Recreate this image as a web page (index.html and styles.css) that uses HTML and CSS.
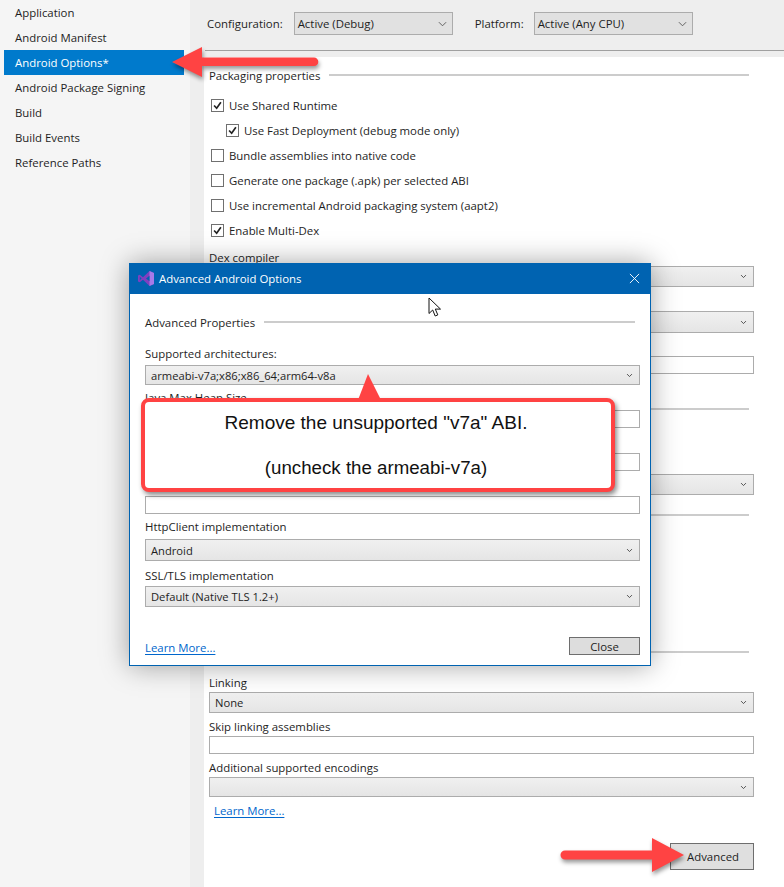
FILE: index.html
```html
<!DOCTYPE html>
<html lang="en">
<head>
<meta charset="utf-8">
<title>Android Options</title>
<link rel="stylesheet" href="styles.css">
</head>
<body>
<div class="page">
  <nav class="sidebar">
    <div class="nav-item">Application</div>
    <div class="nav-item">Android Manifest</div>
    <div class="nav-item active">Android Options*</div>
    <div class="nav-item">Android Package Signing</div>
    <div class="nav-item">Build</div>
    <div class="nav-item">Build Events</div>
    <div class="nav-item">Reference Paths</div>
  </nav>
  <main class="main">
    <header class="config-bar">
      <div class="config-row">
        <span class="config-label">Configuration:</span>
        <div class="combo config-combo"><span>Active (Debug)</span><svg class="chev" viewBox="0 0 10 6"><path d="M1 1l4 4 4-4"/></svg></div>
        <span class="config-label platform">Platform:</span>
        <div class="combo config-combo"><span>Active (Any CPU)</span><svg class="chev" viewBox="0 0 10 6"><path d="M1 1l4 4 4-4"/></svg></div>
      </div>
    </header>
    <section class="content">
      <div class="group-head first"><span>Packaging properties</span><i></i></div>
      <div class="check-row"><span class="box"><svg viewBox="0 0 13 13"><path d="M2.500 6.500l3 3.200 5-7"/></svg></span>Use Shared Runtime</div>
      <div class="check-row sub"><span class="box"><svg viewBox="0 0 13 13"><path d="M2.500 6.500l3 3.200 5-7"/></svg></span>Use Fast Deployment (debug mode only)</div>
      <div class="check-row"><span class="box"></span>Bundle assemblies into native code</div>
      <div class="check-row"><span class="box"></span>Generate one package (.apk) per selected ABI</div>
      <div class="check-row"><span class="box"></span>Use incremental Android packaging system (aapt2)</div>
      <div class="check-row"><span class="box"><svg viewBox="0 0 13 13"><path d="M2.500 6.500l3 3.200 5-7"/></svg></span>Enable Multi-Dex</div>
      <div class="field-label dex">Dex compiler</div>
      <div class="combo wide"><span></span><svg class="chev small" viewBox="0 0 10 6"><path d="M1.500 1l3.500 3.500L8.500 1"/></svg></div>
      <div class="combo wide s2"><span></span><svg class="chev small" viewBox="0 0 10 6"><path d="M1.500 1l3.500 3.500L8.500 1"/></svg></div>
      <div class="input wide s3"></div>
      <div class="rule r1"></div>
      <div class="combo wide s4"><span></span><svg class="chev small" viewBox="0 0 10 6"><path d="M1.500 1l3.500 3.500L8.500 1"/></svg></div>
      <div class="rule r2"></div>
      <div class="rule r3"></div>
      <div class="field-label link">Linking</div>
      <div class="combo wide"><span>None</span><svg class="chev small" viewBox="0 0 10 6"><path d="M1.500 1l3.500 3.500L8.500 1"/></svg></div>
      <div class="field-label skip">Skip linking assemblies</div>
      <div class="input wide"></div>
      <div class="field-label enc">Additional supported encodings</div>
      <div class="combo wide short"><span></span><svg class="chev small" viewBox="0 0 10 6"><path d="M1.500 1l3.500 3.500L8.500 1"/></svg></div>
      <a class="learn main-learn">Learn More...</a>
      <div class="advanced-row"><div class="button advanced">Advanced</div></div>
    </section>
  </main>
</div>

<div class="dialog">
  <div class="titlebar">
    <svg class="vs-logo" viewBox="0 0 16 16"><path fill="#7f3fc0" d="M11.500.6L16 2.500v11l-4.500 1.900L5 9.300 1.800 11.800 0 10.900V5.100l1.800-.9L5 6.700z"/><path fill="#a67ae8" d="M11.500.6L16 2.500v11l-4.500 1.900z"/><path fill="#0063b1" d="M11.500 5.200L8 8l3.500 2.800zM1.800 6.200v3.600L3.600 8z"/></svg>
    <span class="dialog-title">Advanced Android Options</span>
    <svg class="close-x" viewBox="0 0 12 12"><path d="M1 1l10 10M11 1L1 11"/></svg>
  </div>
  <div class="dialog-body">
    <div class="group-head adv"><span>Advanced Properties</span><i></i></div>
    <div class="field-label arch">Supported architectures:</div>
    <div class="combo full tight"><span>armeabi-v7a;x86;x86_64;arm64-v8a</span><svg class="chev small" viewBox="0 0 10 6"><path d="M1.500 1l3.500 3.500L8.500 1"/></svg></div>
    <div class="field-label heap">Java Max Heap Size</div>
    <div class="input full"></div>
    <div class="field-label gap2">Java Options</div>
    <div class="input full"></div>
    <div class="field-label gap3">Extra Options</div>
    <div class="input full"></div>
    <div class="field-label http">HttpClient implementation</div>
    <div class="combo full tall"><span>Android</span><svg class="chev small" viewBox="0 0 10 6"><path d="M1.500 1l3.500 3.500L8.500 1"/></svg></div>
    <div class="field-label ssl">SSL/TLS implementation</div>
    <div class="combo full"><span>Default (Native TLS 1.2+)</span><svg class="chev small" viewBox="0 0 10 6"><path d="M1.500 1l3.500 3.500L8.500 1"/></svg></div>
    <div class="dialog-foot">
      <a class="learn">Learn More...</a>
      <div class="button close-btn">Close</div>
    </div>
  </div>
</div>

<svg class="cursor" viewBox="0 0 14 21"><path d="M1 1v15.500l3.700-3.500 2.500 6 2.600-1.100-2.500-5.800h5.200z"/></svg>

<div class="callout">
  <svg class="callout-tip" viewBox="0 0 23 26"><path d="M10 0l13 26H0z"/></svg>
  <p>Remove the unsupported "v7a" ABI.</p>
  <p>(uncheck the armeabi-v7a)</p>
</div>

<svg class="arrow arrow-left" viewBox="0 0 146 30"><path d="M0 15L30 0v10.500h112a4.300 4.300 0 0 1 0 8.600H30V30z"/></svg>
<svg class="arrow arrow-right" viewBox="0 0 124 34"><path d="M124 17L92 0v12.500H5a4.500 4.500 0 0 0 0 9h87V34z"/></svg>
</body>
</html>
```
FILE: styles.css
```css
* { box-sizing: border-box; }
html, body { margin: 0; padding: 0; }
body {
  width: 784px;
  height: 887px;
  overflow: hidden;
  position: relative;
  font-family: "Open Sans", "Noto Sans", sans-serif;
  font-size: 11.4px;
  color: #1e1e1e;
  background: #fff;
}
.page { display: flex; height: 887px; }

.sidebar { width: 190px; background: #f5f5f5; flex: none; }
.nav-item { height: 25px; line-height: 25px; margin-left: 4px; margin-right: 6px; padding-left: 11px; }
.active { background: #007acc; color: #fff; }

.main { flex: 1; background: #eee; display: flex; flex-direction: column; min-width: 0; }
.config-bar { height: 57px; flex: none; padding: 12px 0 0 17px; }
.config-row { display: flex; align-items: center; height: 23px; }
.config-label { margin-right: 11px; }
.platform { margin-left: 22px; margin-right: 10px; }
.config-bar::after { content: ""; display: block; height: 1px; background: #a0a0a0; margin: 15px 0 0 -2px; }

.combo {
  display: flex; align-items: center; justify-content: space-between;
  border: 1px solid #acacac;
  background: linear-gradient(#f0f0f0, #e5e5e5);
  padding: 0 6px 0 5px;
  height: 21px;
  font-size: 11.2px;
}
.config-combo { width: 159px; height: 23px; background: #e1e1e1; padding: 0 5px 0 3px; font-size: 11.4px; }
.chev { width: 9px; height: 6px; fill: none; stroke: #555; stroke-width: 1; flex: none; }
.chev.small { width: 7px; height: 5px; stroke-width: 1.3; stroke: #444; }

.content { flex: 1; margin-left: 14px; background: #fff; padding: 0 30px 0 5px; }
.group-head { display: flex; align-items: center; gap: 9px; height: 20px; }
.group-head i { flex: 1; height: 2px; background: #ccc; }
.group-head.first { margin-top: 8px; margin-right: 5px; margin-bottom: 8px; }

.check-row { display: flex; align-items: center; height: 25px; gap: 5px; padding-left: 2px; }
.check-row.sub { padding-left: 17px; }
.box { width: 13px; height: 13px; border: 1px solid #707070; background: #fff; flex: none; display: block; }
.box svg { display: block; width: 11px; height: 11px; fill: none; stroke: #222; stroke-width: 2; }

.field-label { line-height: 15px; height: 15px; }
.dex { margin-top: 7px; margin-bottom: 1px; }
.wide { width: 545px; }
.s2 { margin-top: 24px; height: 22px; }
.s3 { margin-top: 23px; }
.input { height: 18px; border: 1px solid #acacac; background: #fff; }
.rule { height: 2px; background: #ccc; margin-right: 5px; }
.r1 { margin-top: 34px; margin-bottom: 64px; }
.r2 { margin-top: 19px; }
.r3 { margin-top: 135px; }
.link { margin-top: 22px; margin-bottom: 2px; }
.skip { margin-top: 6px; margin-bottom: 2px; }
.enc { margin-top: 6px; margin-bottom: 2px; }
.short { height: 20px; }

.learn { color: #0066cc; text-decoration: underline; text-underline-offset: 2px; }
.main-learn { display: block; margin: 6px 0 0 5px; line-height: 15px; width: max-content; }
.advanced-row { display: flex; justify-content: flex-end; width: 545px; margin-top: 25px; }
.button { display: flex; align-items: center; justify-content: center; background: #dfdfdf; border: 1px solid #6e6e6e; }
.advanced { width: 84px; height: 27px; padding-left: 2px; }

.dialog {
  position: absolute; left: 129px; top: 263px; width: 522px; height: 403px;
  background: #fff; border: 1px solid #0063b1; border-top: 0;
  box-shadow: 0 0 26px rgba(0,0,0,.36);
  display: flex; flex-direction: column;
}
.titlebar { height: 31px; flex: none; background: #0063b1; color: #fff; display: flex; align-items: center; padding: 0 10px 0 8px; }
.vs-logo { width: 16px; height: 17px; flex: none; }
.dialog-title { margin-left: 5px; flex: 1; }
.close-x { width: 11px; height: 11px; fill: none; stroke: #fff; stroke-width: 1; }
.dialog-body { flex: 1; padding: 0 10px 0 15px; display: flex; flex-direction: column; }
.group-head.adv { margin-top: 18px; margin-right: 5px; }
.field-label.arch { margin-top: 14px; margin-bottom: 4px; }
.full { width: 495px; flex: none; }
.tight { height: 20px; }
.tall { height: 22px; }
.heap { margin-top: 5px; margin-bottom: 5px; }
.gap2 { margin-top: 9px; margin-bottom: 1px; }
.gap3 { margin-top: 6px; margin-bottom: 4px; }
.http { margin-top: 5px; margin-bottom: 5px; }
.ssl { margin-top: 7px; margin-bottom: 3px; }
.dialog-foot { display: flex; justify-content: space-between; align-items: center; width: 495px; margin-top: 30px; }
.dialog-foot .learn { margin-top: 3px; }
.close-btn { width: 71px; height: 18px; background: #ddd; }

.cursor { position: absolute; left: 428px; top: 297px; width: 14px; height: 21px; fill: #fff; stroke: #111; stroke-width: 1; }

.callout {
  position: absolute; left: 141px; top: 398px; width: 474px; height: 94px;
  background: #fff; border: 4px solid #ff4343; border-radius: 8px;
  box-shadow: 2px 3px 5px rgba(0,0,0,.45);
  font-family: "Liberation Sans", Arial, sans-serif;
  font-size: 19px; color: #111; text-align: center;
  padding: 9.5px 4px 0 0;
}
.callout p { margin: 0; line-height: 21px; }
.callout p + p { margin-top: 24px; font-size: 18.7px; }
.callout-tip { position: absolute; left: 213px; top: -28px; width: 23px; height: 26px; fill: #ff4343; }

.arrow { position: absolute; fill: #ff4343; filter: drop-shadow(1px 3px 2px rgba(0,0,0,.4)); overflow: visible; }
.arrow-left { left: 172px; top: 47px; width: 146px; height: 30px; }
.arrow-right { left: 560px; top: 838px; width: 124px; height: 34px; }
```
